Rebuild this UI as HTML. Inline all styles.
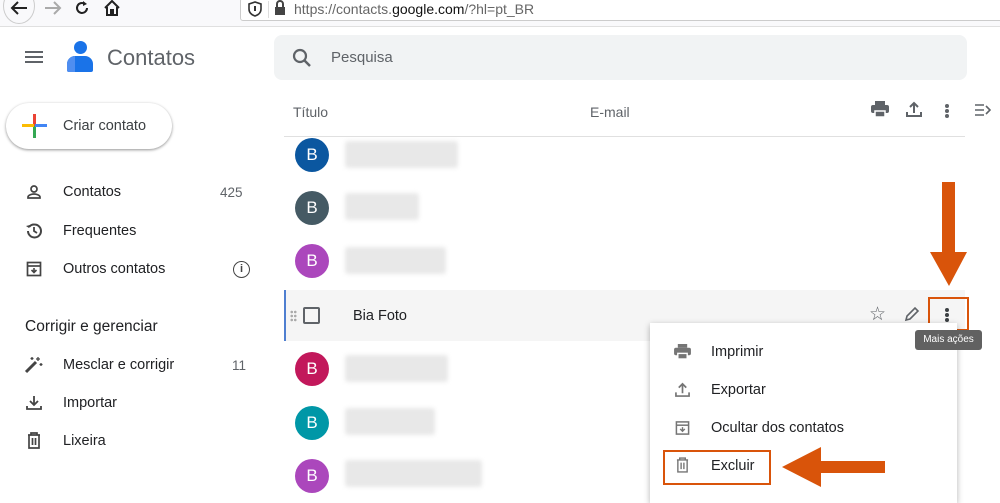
<!DOCTYPE html>
<html><head><meta charset="utf-8">
<style>
*{box-sizing:border-box;margin:0;padding:0}
body{width:1000px;height:491px;overflow:hidden;background:#fff;font-family:"Liberation Sans",Roboto,sans-serif;color:#202124;position:relative}
.a{position:absolute}
.t{position:absolute;white-space:nowrap}
.av{position:absolute;width:34px;height:34px;border-radius:50%;color:#fff;font-size:17px;text-align:center;line-height:34px;left:295px}
.bl{position:absolute;left:345px;height:27px;background:#e8e8e8;filter:blur(2px);border-radius:3px}
.ic{position:absolute}
</style></head><body>
<!-- browser bar -->
<div class="a" style="left:0;top:0;width:1000px;height:27px;background:#f9f9fb;border-bottom:1px solid #e0e0e0"></div>
<div class="a" style="left:3px;top:-12px;width:32px;height:36px;border-radius:50%;border:1px solid #ccc;background:#f9f9fb"></div>
<svg class="ic" style="left:9px;top:0" width="20" height="16" viewBox="0 0 20 16"><path d="M18 8H3M9 2L3 8l6 6" fill="none" stroke="#222" stroke-width="2"/></svg>
<svg class="ic" style="left:43px;top:0" width="20" height="16" viewBox="0 0 20 16"><path d="M2 8h15M11 2l6 6-6 6" fill="none" stroke="#aaa" stroke-width="2"/></svg>
<svg class="ic" style="left:74px;top:0" width="16" height="16" viewBox="0 0 16 16"><path d="M13 8a5 5 0 11-2-4" fill="none" stroke="#222" stroke-width="2"/><path d="M9 1l4 3-4 2z" fill="#222"/></svg>
<svg class="ic" style="left:103px;top:0" width="18" height="16" viewBox="0 0 18 16"><path d="M2 8L9 1l7 7M4 7v8h4v-5h2v5h4V7" fill="none" stroke="#222" stroke-width="2"/></svg>
<div class="a" style="left:240px;top:-2px;width:770px;height:23px;background:#fff;border:1px solid #ccc;border-radius:3px"></div>
<svg class="ic" style="left:248px;top:1px" width="14" height="16" viewBox="0 0 14 16"><path d="M7 1L1 3v5c0 4 3 6 6 7 3-1 6-3 6-7V3z" fill="none" stroke="#333" stroke-width="1.6"/><path d="M7 5v5" stroke="#333" stroke-width="2"/></svg>
<div class="a" style="left:268px;top:1px;width:1px;height:17px;background:#ddd"></div>
<svg class="ic" style="left:274px;top:0" width="12" height="16" viewBox="0 0 12 16"><rect x="1" y="7" width="10" height="8" fill="#444"/><path d="M3 7V4a3 3 0 016 0v3" fill="none" stroke="#444" stroke-width="2"/></svg>
<div class="t" style="left:294px;top:1px;font-size:14px;color:#666">https://contacts.<span style="color:#111">google.com</span>/?hl=pt_BR</div>

<!-- header -->
<div class="a" style="left:25px;top:51px;width:18px;height:2px;background:#5f6368;box-shadow:0 5px 0 #5f6368,0 10px 0 #5f6368"></div>
<div class="a" style="left:74px;top:41px;width:13px;height:13px;border-radius:50%;background:#1a73e8"></div>
<div class="a" style="left:67px;top:56px;width:26px;height:16px;border-radius:8px 8px 2px 2px;background:#1a73e8"></div>
<div class="a" style="left:67px;top:56px;width:8px;height:16px;border-radius:8px 0 0 2px;background:#4f8ef0"></div>
<div class="t" style="left:107px;top:45px;font-size:22px;color:#5f6368">Contatos</div>
<div class="a" style="left:274px;top:35px;width:693px;height:45px;background:#f1f3f4;border-radius:8px"></div>
<svg class="ic" style="left:292px;top:48px" width="20" height="20" viewBox="0 0 20 20"><circle cx="8" cy="8" r="6" fill="none" stroke="#5f6368" stroke-width="2.2"/><path d="M12.5 12.5L18 18" stroke="#5f6368" stroke-width="2.5"/></svg>
<div class="t" style="left:331px;top:49px;font-size:15px;color:#5f6368">Pesquisa</div>

<!-- criar -->
<div class="a" style="left:6px;top:103px;width:166px;height:46px;border-radius:23px;background:#fff;box-shadow:0 1px 3px rgba(0,0,0,.3),0 1px 2px rgba(0,0,0,.15)"></div>
<div class="a" style="left:33px;top:114px;width:3px;height:12px;background:#ea4335"></div>
<div class="a" style="left:33px;top:126px;width:3px;height:12px;background:#34a853"></div>
<div class="a" style="left:22px;top:124px;width:12px;height:3px;background:#fbbc04"></div>
<div class="a" style="left:35px;top:124px;width:12px;height:3px;background:#4285f4"></div>
<div class="t" style="left:63px;top:118px;font-size:14.5px;color:#3c4043">Criar contato</div>

<!-- sidebar -->
<svg class="ic" style="left:26px;top:184px" width="16" height="16" viewBox="0 0 16 16"><circle cx="8" cy="5" r="3" fill="none" stroke="#444" stroke-width="1.7"/><path d="M2 14v-1c0-2 4-3 6-3s6 1 6 3v1z" fill="none" stroke="#444" stroke-width="1.7"/></svg>
<div class="t" style="left:63px;top:184px;font-size:14.5px">Contatos</div>
<div class="t" style="left:220px;top:185px;font-size:13.5px;color:#5f6368">425</div>
<svg class="ic" style="left:25px;top:222px" width="18" height="18" viewBox="0 0 18 18"><path d="M3 9a6.5 6.5 0 106.5-6.5A6.5 6.5 0 004 5" fill="none" stroke="#444" stroke-width="2"/><path d="M1 4l3 2 1-3" fill="#444"/><path d="M9 5v4l3 2" fill="none" stroke="#444" stroke-width="1.8"/></svg>
<div class="t" style="left:63px;top:223px;font-size:14.5px">Frequentes</div>
<svg class="ic" style="left:26px;top:261px" width="16" height="16" viewBox="0 0 16 16"><rect x="1.5" y="1.5" width="13" height="13" fill="none" stroke="#444" stroke-width="1.7"/><path d="M1.5 5h13" stroke="#444" stroke-width="1.7"/><path d="M8 7v4M5.5 9L8 11.5 10.5 9" fill="none" stroke="#444" stroke-width="1.6"/></svg>
<div class="t" style="left:63px;top:261px;font-size:14.5px">Outros contatos</div>
<div class="a" style="left:233px;top:261px;width:17px;height:17px;border:1.5px solid #444;border-radius:50%;font-size:11px;text-align:center;line-height:14px;color:#444;font-weight:bold">i</div>
<div class="t" style="left:25px;top:318px;font-size:15.5px">Corrigir e gerenciar</div>
<svg class="ic" style="left:24px;top:356px" width="20" height="18" viewBox="0 0 20 18"><path d="M2 16L12 6" stroke="#444" stroke-width="3"/><path d="M14 1v4M12 3h4M17 7v3M15.5 8.5h3M8 1v3M6.5 2.5h3" stroke="#444" stroke-width="1.3"/></svg>
<div class="t" style="left:63px;top:357px;font-size:14.5px">Mesclar e corrigir</div>
<div class="t" style="left:232px;top:358px;font-size:13.5px;color:#5f6368">11</div>
<svg class="ic" style="left:26px;top:395px" width="16" height="16" viewBox="0 0 16 16"><path d="M8 1v9M4 6l4 4 4-4" fill="none" stroke="#444" stroke-width="1.8"/><path d="M1 11v3h14v-3" fill="none" stroke="#444" stroke-width="1.8"/></svg>
<div class="t" style="left:63px;top:395px;font-size:14.5px">Importar</div>
<svg class="ic" style="left:27px;top:432px" width="14" height="17" viewBox="0 0 14 17"><path d="M1 3h12M4 3V1h6v2M2 3v13h10V3M5.5 6v7M8.5 6v7" fill="none" stroke="#444" stroke-width="1.7"/></svg>
<div class="t" style="left:63px;top:433px;font-size:14.5px">Lixeira</div>

<!-- list header -->
<div class="t" style="left:293px;top:104px;font-size:14px;color:#5f6368">Título</div>
<div class="t" style="left:590px;top:104px;font-size:14px;color:#5f6368">E-mail</div>
<svg class="ic" style="left:871px;top:101px" width="18" height="16" viewBox="0 0 18 16"><rect x="4" y="0" width="10" height="4" fill="#5f6368"/><rect x="0" y="4" width="18" height="8" rx="2" fill="#5f6368"/><rect x="4" y="10" width="10" height="6" fill="#5f6368" stroke="#fff" stroke-width="1.5"/></svg>
<svg class="ic" style="left:906px;top:101px" width="16" height="16" viewBox="0 0 16 16"><path d="M8 12V2M4 6l4-4 4 4" fill="none" stroke="#5f6368" stroke-width="2"/><path d="M1 11v4h14v-4" fill="none" stroke="#5f6368" stroke-width="2"/></svg>
<div class="a" style="left:945px;top:104px;width:4px;height:4px;border-radius:50%;background:#5f6368;box-shadow:0 5px 0 #5f6368,0 10px 0 #5f6368"></div>
<svg class="ic" style="left:975px;top:104px" width="16" height="12" viewBox="0 0 16 12"><path d="M0 1h9M0 6h9M0 11h9M11 2l4 4-4 4" fill="none" stroke="#5f6368" stroke-width="1.6"/></svg>
<div class="a" style="left:284px;top:136px;width:681px;height:1px;background:#e0e0e0"></div>

<!-- rows -->
<div class="av" style="top:138px;background:#0b57a0">B</div><div class="bl" style="top:141px;width:113px"></div>
<div class="av" style="top:191px;background:#455a64">B</div><div class="bl" style="top:193px;width:74px"></div>
<div class="av" style="top:244px;background:#ab47bc">B</div><div class="bl" style="top:247px;width:101px"></div>
<div class="a" style="left:284px;top:290px;width:681px;height:51px;background:#f5f5f5;border-left:2px solid #4f7fd0"></div>
<div class="a" style="left:290px;top:310px;width:7px;height:12px;background:radial-gradient(circle,#aaa 1.2px,transparent 1.4px) 0 0/3.5px 4px"></div>
<div class="a" style="left:303px;top:307px;width:17px;height:17px;border:2px solid #5f6368;border-radius:2px"></div>
<div class="t" style="left:353px;top:308px;font-size:14.5px">Bia Foto</div>
<div class="t" style="left:869px;top:303px;font-size:19px;color:#5f6368">☆</div>
<svg class="ic" style="left:904px;top:306px" width="16" height="16" viewBox="0 0 16 16"><path d="M2 14l1-4 8-8 3 3-8 8z" fill="none" stroke="#5f6368" stroke-width="1.6"/></svg>
<div class="a" style="left:945px;top:308px;width:4px;height:4px;border-radius:50%;background:#3c4043;box-shadow:0 5px 0 #3c4043,0 10px 0 #3c4043"></div>
<div class="a" style="left:928px;top:297px;width:41px;height:34px;border:2.5px solid #d9540a"></div>
<div class="av" style="top:352px;background:#c2185b">B</div><div class="bl" style="top:355px;width:103px"></div>
<div class="av" style="top:406px;background:#0097a7">B</div><div class="bl" style="top:408px;width:90px"></div>
<div class="av" style="top:459px;background:#ab47bc">B</div><div class="bl" style="top:460px;width:137px"></div>

<!-- menu -->
<div class="a" style="left:650px;top:323px;width:307px;height:180px;background:#fff;box-shadow:0 2px 6px rgba(0,0,0,.3)"></div>
<svg class="ic" style="left:674px;top:344px" width="17" height="15" viewBox="0 0 18 16"><rect x="4" y="0" width="10" height="4" fill="#757575"/><rect x="0" y="4" width="18" height="8" rx="2" fill="#757575"/><rect x="4" y="10" width="10" height="6" fill="#757575" stroke="#fff" stroke-width="1.5"/></svg>
<div class="t" style="left:711px;top:344px;font-size:14.5px">Imprimir</div>
<svg class="ic" style="left:675px;top:382px" width="15" height="15" viewBox="0 0 16 16"><path d="M8 12V2M4 6l4-4 4 4" fill="none" stroke="#757575" stroke-width="1.8"/><path d="M1 11v4h14v-4" fill="none" stroke="#757575" stroke-width="1.8"/></svg>
<div class="t" style="left:711px;top:382px;font-size:14.5px">Exportar</div>
<svg class="ic" style="left:675px;top:420px" width="15" height="16" viewBox="0 0 16 16"><rect x="1.5" y="1.5" width="13" height="13" fill="none" stroke="#757575" stroke-width="1.6"/><path d="M1.5 5h13" stroke="#757575" stroke-width="1.6"/><path d="M8 7v4M5.5 9L8 11.5 10.5 9" fill="none" stroke="#757575" stroke-width="1.5"/></svg>
<div class="t" style="left:711px;top:420px;font-size:14.5px">Ocultar dos contatos</div>
<svg class="ic" style="left:676px;top:457px" width="13" height="16" viewBox="0 0 14 17"><path d="M1 3h12M4 3V1h6v2M2 3v13h10V3M5.5 6v7M8.5 6v7" fill="none" stroke="#757575" stroke-width="1.5"/></svg>
<div class="t" style="left:711px;top:458px;font-size:14.5px">Excluir</div>
<div class="a" style="left:663px;top:450px;width:108px;height:35px;border:2.5px solid #d9540a"></div>

<div class="a" style="left:915px;top:330px;width:67px;height:20px;background:#616161;border-radius:3px;color:#fff;font-size:10px;text-align:center;line-height:20px">Mais ações</div>

<!-- arrows -->
<svg class="ic" style="left:0;top:0" width="1000" height="491" viewBox="0 0 1000 491">
<path d="M942 182h13v70h12l-18 34-19-34h12z" fill="#d9540a"/>
<path d="M885 461v12h-64v14l-39-20 39-20v14z" fill="#d9540a"/>
</svg>
</body></html>
